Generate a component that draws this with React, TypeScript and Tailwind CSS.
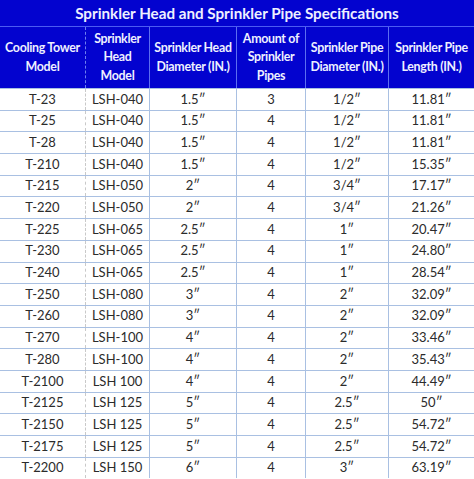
import React from "react";

const rows: string[][] = [
  ["T-23", "LSH-040", "1.5\u2033", "3", "1/2\u2033", "11.81\u2033"],
  ["T-25", "LSH-040", "1.5\u2033", "4", "1/2\u2033", "11.81\u2033"],
  ["T-28", "LSH-040", "1.5\u2033", "4", "1/2\u2033", "11.81\u2033"],
  ["T-210", "LSH-040", "1.5\u2033", "4", "1/2\u2033", "15.35\u2033"],
  ["T-215", "LSH-050", "2\u2033", "4", "3/4\u2033", "17.17\u2033"],
  ["T-220", "LSH-050", "2\u2033", "4", "3/4\u2033", "21.26\u2033"],
  ["T-225", "LSH-065", "2.5\u2033", "4", "1\u2033", "20.47\u2033"],
  ["T-230", "LSH-065", "2.5\u2033", "4", "1\u2033", "24.80\u2033"],
  ["T-240", "LSH-065", "2.5\u2033", "4", "1\u2033", "28.54\u2033"],
  ["T-250", "LSH-080", "3\u2033", "4", "2\u2033", "32.09\u2033"],
  ["T-260", "LSH-080", "3\u2033", "4", "2\u2033", "32.09\u2033"],
  ["T-270", "LSH-100", "4\u2033", "4", "2\u2033", "33.46\u2033"],
  ["T-280", "LSH-100", "4\u2033", "4", "2\u2033", "35.43\u2033"],
  ["T-2100", "LSH 100", "4\u2033", "4", "2\u2033", "44.49\u2033"],
  ["T-2125", "LSH 125", "5\u2033", "4", "2.5\u2033", "50\u2033"],
  ["T-2150", "LSH 125", "5\u2033", "4", "2.5\u2033", "54.72\u2033"],
  ["T-2175", "LSH 125", "5\u2033", "4", "2.5\u2033", "54.72\u2033"],
  ["T-2200", "LSH 150", "6\u2033", "4", "3\u2033", "63.19\u2033"],
];

const headers: string[][] = [
  ["Cooling Tower", "Model"],
  ["Sprinkler", "Head", "Model"],
  ["Sprinkler Head", "Diameter (IN.)"],
  ["Amount of", "Sprinkler", "Pipes"],
  ["Sprinkler Pipe", "Diameter (IN.)"],
  ["Sprinkler Pipe", "Length (IN.)"],
];

const cols = "grid grid-cols-[86px_64px_87px_69px_83px_85px]";

export default function App() {
  return (
    <div
      className="w-[474px] h-[479px] overflow-hidden bg-white"
      style={{ fontFamily: "Lato, 'Open Sans', sans-serif" }}
    >
      {/* Title */}
      <div className="h-[27px] bg-[#0303cf] border-b border-[#4b5cf2] flex items-center justify-center">
        <h1 className="text-[15.2px] font-bold text-[#eef0ff] whitespace-nowrap">
          Sprinkler Head and Sprinkler Pipe Specifications
        </h1>
      </div>

      {/* Header row */}
      <div className={`${cols} h-[61px] bg-[#0303cf]`}>
        {headers.map((lines, i) => (
          <div
            key={i}
            className={`flex flex-col items-center justify-center text-[12.4px] font-bold leading-[18.5px] tracking-[-0.3px] text-[#eef0ff] whitespace-nowrap ${
              i === 0
                ? "border-r border-dashed border-[#6f7ff0]"
                : i < 5
                ? "border-r border-[#5d6ef0]"
                : ""
            }`}
          >
            {lines.map((l) => (
              <span key={l}>{l}</span>
            ))}
          </div>
        ))}
      </div>

      {/* Data rows */}
      {rows.map((r, ri) => (
        <div
          key={ri}
          className={`${cols} h-[21.7px] border-t border-[#a9c0e2] text-[13px] text-[#2b2b2b]`}
        >
          {r.map((c, ci) => (
            <div
              key={ci}
              className={`flex items-center justify-center ${
                ci === 0
                  ? "border-r border-dashed border-[#c9c9c9]"
                  : ci < 5
                  ? "border-r border-[#a9c0e2]"
                  : ""
              }`}
            >
              {c}
            </div>
          ))}
        </div>
      ))}
    </div>
  );
}
